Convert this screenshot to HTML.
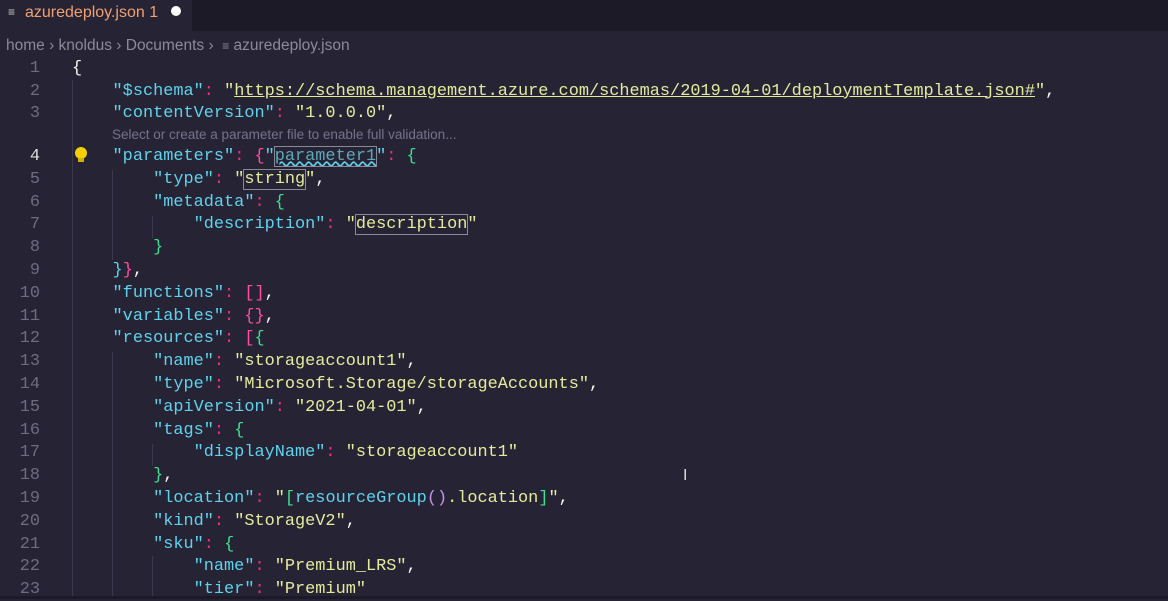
<!DOCTYPE html><html><head><style>
body{margin:0;width:1168px;height:599px;overflow:hidden;background:#262335;font-family:"Liberation Sans",sans-serif}
.tabs{height:31px;background:#1b1a26;position:relative}
.tab{position:absolute;left:0;top:0;width:192px;height:31px;background:#262335;color:#f0a070;font-size:16px;line-height:25px}
.bc{position:absolute;top:37px;left:6px;color:#8b8a9a;font-size:15.5px}
.ln{position:absolute;left:0;width:40px;text-align:right;color:#6e6d80;font:16.9px "Liberation Mono",monospace}
.cl{position:absolute;left:72px;white-space:pre;font:16.9px "Liberation Mono",monospace;color:#f8f8f2}
.k{color:#5fd3ec}.s{color:#e4ec9c}.p{color:#f92a82}.g{color:#3ee08f}.m{color:#ff4fa0}.w{color:#f8f8f2}.v{color:#c792ea}
.guide{position:absolute;width:1px;background:#3b3950}
.box{outline:1px solid #8a8a95}
</style></head><body>
<div class="tabs"><div class="tab"><span style="position:absolute;left:8px;color:#ccc;font-size:12px">&#8801;</span><span style="position:absolute;left:25px">azuredeploy.json 1</span><span style="position:absolute;left:171px;top:6px;width:10px;height:10px;border-radius:5px;background:#fff"></span></div></div>
<div class="bc">home &#8250; knoldus &#8250; Documents &#8250;&nbsp; <span style="font-size:12px">&#8801;</span> azuredeploy.json</div>
<div class="guide" style="left:72px;top:80px;height:519px"></div>
<div class="guide" style="left:112px;top:170px;height:90px"></div>
<div class="guide" style="left:152px;top:216px;height:22px"></div>
<div class="guide" style="left:112px;top:352px;height:247px"></div>
<div class="guide" style="left:152px;top:444px;height:22px"></div>
<div class="guide" style="left:152px;top:556px;height:43px"></div>
<div id="c"></div>
<div style="position:absolute;left:112px;top:127px;color:#75738a;font-size:13.5px">Select or create a parameter file to enable full validation...</div>
<div style="position:absolute;left:75px;top:147px;width:12px;height:12px;border-radius:6px;background:#f5d000"></div>
<div style="position:absolute;left:78px;top:158px;width:6px;height:4px;background:#d0b000"></div>
<div style="position:absolute;left:683px;top:467px;color:#ddd;font-size:16px">I</div>
<div style="position:absolute;left:0;top:596px;width:1168px;height:3px;background:#1b1a26"></div>
<script>
var L=[
[1,'<span class="w">{</span>'],
[2,'    <span class="k">"$schema"</span><span class="p">:</span> <span class="s">"<u>https://schema.management.azure.com/schemas/2019-04-01/deploymentTemplate.json#</u>"</span><span class="w">,</span>'],
[3,'    <span class="k">"contentVersion"</span><span class="p">:</span> <span class="s">"1.0.0.0"</span><span class="w">,</span>'],
[4,'    <span class="k">"parameters"</span><span class="p">:</span> <span class="m">{</span><span class="k">"<span class="box" style="text-decoration:underline wavy #5fd3ec;color:#5fa8b8">parameter1</span>"</span><span class="p">:</span> <span class="g">{</span>'],
[5,'        <span class="k">"type"</span><span class="p">:</span> <span class="s">"<span class="box">string</span>"</span><span class="w">,</span>'],
[6,'        <span class="k">"metadata"</span><span class="p">:</span> <span class="g">{</span>'],
[7,'            <span class="k">"description"</span><span class="p">:</span> <span class="s">"<span class="box">description</span>"</span>'],
[8,'        <span class="g">}</span>'],
[9,'    <span class="k">}</span><span class="m">}</span><span class="w">,</span>'],
[10,'    <span class="k">"functions"</span><span class="p">:</span> <span class="m">[]</span><span class="w">,</span>'],
[11,'    <span class="k">"variables"</span><span class="p">:</span> <span class="m">{}</span><span class="w">,</span>'],
[12,'    <span class="k">"resources"</span><span class="p">:</span> <span class="m">[</span><span class="g">{</span>'],
[13,'        <span class="k">"name"</span><span class="p">:</span> <span class="s">"storageaccount1"</span><span class="w">,</span>'],
[14,'        <span class="k">"type"</span><span class="p">:</span> <span class="s">"Microsoft.Storage/storageAccounts"</span><span class="w">,</span>'],
[15,'        <span class="k">"apiVersion"</span><span class="p">:</span> <span class="s">"2021-04-01"</span><span class="w">,</span>'],
[16,'        <span class="k">"tags"</span><span class="p">:</span> <span class="g">{</span>'],
[17,'            <span class="k">"displayName"</span><span class="p">:</span> <span class="s">"storageaccount1"</span>'],
[18,'        <span class="g">}</span><span class="w">,</span>'],
[19,'        <span class="k">"location"</span><span class="p">:</span> <span class="s">"<span class="g">[</span><span class="k">resourceGroup</span><span class="v">()</span>.location<span class="g">]</span>"</span><span class="w">,</span>'],
[20,'        <span class="k">"kind"</span><span class="p">:</span> <span class="s">"StorageV2"</span><span class="w">,</span>'],
[21,'        <span class="k">"sku"</span><span class="p">:</span> <span class="g">{</span>'],
[22,'            <span class="k">"name"</span><span class="p">:</span> <span class="s">"Premium_LRS"</span><span class="w">,</span>'],
[23,'            <span class="k">"tier"</span><span class="p">:</span> <span class="s">"Premium"</span>']];
var h='';
L.forEach(function(l){var n=l[0];var y=n<4?58+(n-1)*22.7:146+(n-4)*22.8;
h+='<div class="ln" style="top:'+y+'px;line-height:22px'+(n==4?';color:#ddd':'')+'">'+n+'</div><div class="cl" style="top:'+y+'px;line-height:22px">'+l[1]+'</div>';});
document.getElementById('c').innerHTML=h;
</script>
</body></html>
